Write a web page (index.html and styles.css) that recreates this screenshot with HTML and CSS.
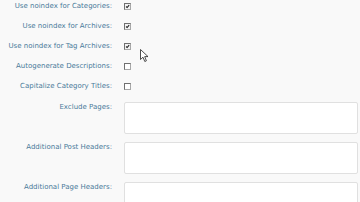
FILE: index.html
```html
<!DOCTYPE html>
<html lang="en">
<head>
    <meta charset="UTF-8">
    <title>SEO Options</title>
    <link rel="stylesheet" href="styles.css">
</head>
<body>
    <div class="form">
        <label class="label">Use noindex for Categories:</label>
        <div class="field"><span class="check on"><svg viewBox="0 0 7 7"><path d="M1.5 3.5 L3 5 L5.8 1.6" /></svg></span></div>

        <label class="label">Use noindex for Archives:</label>
        <div class="field"><span class="check on"><svg viewBox="0 0 7 7"><path d="M1.5 3.5 L3 5 L5.8 1.6" /></svg></span></div>

        <label class="label">Use noindex for Tag Archives:</label>
        <div class="field"><span class="check on"><svg viewBox="0 0 7 7"><path d="M1.5 3.5 L3 5 L5.8 1.6" /></svg></span></div>

        <label class="label">Autogenerate Descriptions:</label>
        <div class="field"><span class="check"></span></div>

        <label class="label">Capitalize Category Titles:</label>
        <div class="field"><span class="check"></span></div>

        <label class="label top">Exclude Pages:</label>
        <div class="field big"><textarea class="box"></textarea></div>

        <label class="label top">Additional Post Headers:</label>
        <div class="field big"><textarea class="box"></textarea></div>

        <label class="label top">Additional Page Headers:</label>
        <div class="field big"><textarea class="box"></textarea></div>
    </div>

    <svg class="cursor" width="10" height="14" viewBox="0 0 10 14">
        <path d="M0.5 0.5 L0.5 10.5 L3 8.2 L4.8 12.5 L6.4 11.8 L4.7 7.6 L8 7.6 Z" fill="#fff" stroke="#222" stroke-width="0.8" stroke-linejoin="round" />
    </svg>
</body>
</html>
```

FILE: styles.css
```css
body {
    margin: 0;
    background-color: #f9f9f9;
    font-family: "DejaVu Sans", Verdana, sans-serif;
    font-size: 7px;
    overflow: hidden;
    position: relative;
    height: 202px;
}
.form {
    display: grid;
    grid-template-columns: 112px 234px;
    column-gap: 12px;
    row-gap: 8px;
}
.label {
    color: #4a7a99;
    text-align: right;
    line-height: 12px;
    height: 12px;
}
.field {
    display: flex;
    align-items: center;
    height: 12px;
}
.check {
    width: 7px;
    height: 7px;
    box-sizing: border-box;
    border: 1px solid #a8a8a8;
    border-top-color: #707070;
    border-left-color: #707070;
    background-color: #fff;
    display: flex;
}
.check.on {
    background-color: #f2f2f2;
}
.check svg {
    width: 5px;
    height: 5px;
    fill: none;
    stroke: #222;
    stroke-width: 1.5;
}
.label.top {
    height: 32px;
    line-height: 10px;
}
.field.big {
    height: 32px;
    align-items: flex-start;
}
.form .label.top:nth-child(11),
.form .field.big:nth-child(12) {
    margin-top: 2px;
}
.box {
    display: block;
    width: 234px;
    height: 32px;
    margin: 0;
    padding: 0;
    box-sizing: border-box;
    border: 1px solid #e0e0e0;
    border-radius: 2px;
    background-color: #fff;
    resize: none;
}
.cursor {
    position: absolute;
    left: 140px;
    top: 49px;
}
```
